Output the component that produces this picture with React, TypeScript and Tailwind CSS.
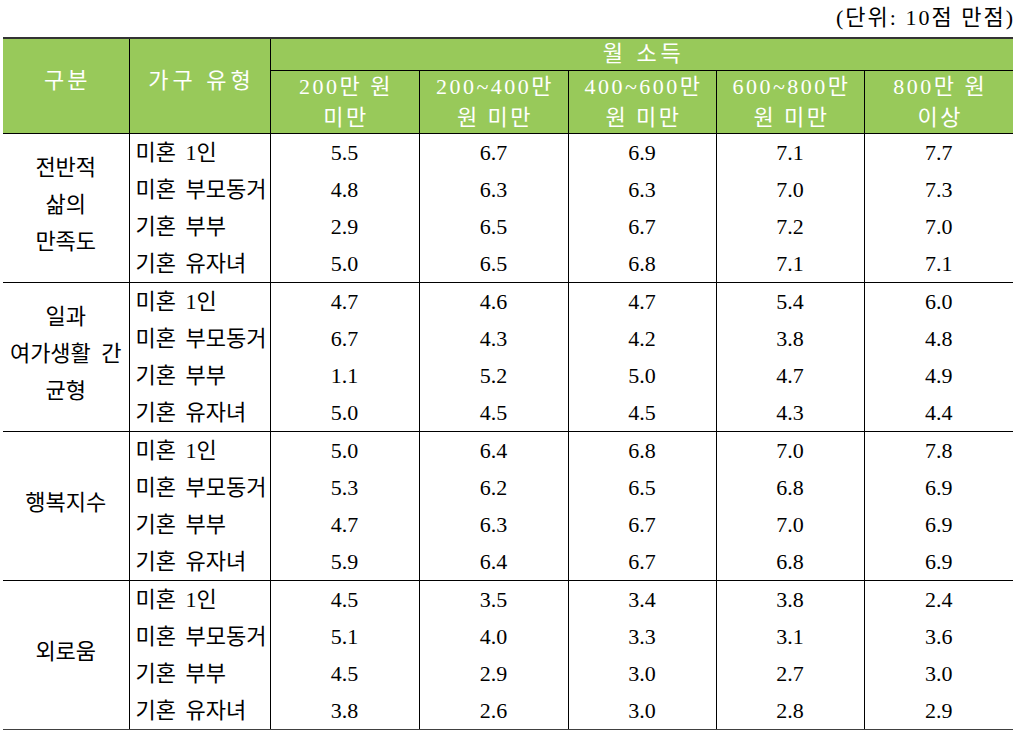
import React from "react";

const groups = [
  {
    label: ["전반적", "삶의", "만족도"],
    rows: [
      ["미혼 1인", "5.5", "6.7", "6.9", "7.1", "7.7"],
      ["미혼 부모동거", "4.8", "6.3", "6.3", "7.0", "7.3"],
      ["기혼 부부", "2.9", "6.5", "6.7", "7.2", "7.0"],
      ["기혼 유자녀", "5.0", "6.5", "6.8", "7.1", "7.1"],
    ],
  },
  {
    label: ["일과", "여가생활 간", "균형"],
    rows: [
      ["미혼 1인", "4.7", "4.6", "4.7", "5.4", "6.0"],
      ["미혼 부모동거", "6.7", "4.3", "4.2", "3.8", "4.8"],
      ["기혼 부부", "1.1", "5.2", "5.0", "4.7", "4.9"],
      ["기혼 유자녀", "5.0", "4.5", "4.5", "4.3", "4.4"],
    ],
  },
  {
    label: ["행복지수"],
    rows: [
      ["미혼 1인", "5.0", "6.4", "6.8", "7.0", "7.8"],
      ["미혼 부모동거", "5.3", "6.2", "6.5", "6.8", "6.9"],
      ["기혼 부부", "4.7", "6.3", "6.7", "7.0", "6.9"],
      ["기혼 유자녀", "5.9", "6.4", "6.7", "6.8", "6.9"],
    ],
  },
  {
    label: ["외로움"],
    rows: [
      ["미혼 1인", "4.5", "3.5", "3.4", "3.8", "2.4"],
      ["미혼 부모동거", "5.1", "4.0", "3.3", "3.1", "3.6"],
      ["기혼 부부", "4.5", "2.9", "3.0", "2.7", "3.0"],
      ["기혼 유자녀", "3.8", "2.6", "3.0", "2.8", "2.9"],
    ],
  },
];

const incomes = [
  ["200만 원", "미만"],
  ["200~400만", "원 미만"],
  ["400~600만", "원 미만"],
  ["600~800만", "원 미만"],
  ["800만 원", "이상"],
];

export default function App() {
  return (
    <div
      className="w-[1016px] h-[730px] bg-white text-black overflow-hidden"
      style={{ fontFamily: '"Liberation Serif", "Noto Sans CJK KR", serif' }}
    >
      <div className="h-[37px] pr-[1px] pt-[4px] text-right text-[22px] leading-[28px] tracking-[2px]">
        (단위: 10점 만점)
      </div>
      <table className="ml-[3px] w-[1010px] border-collapse table-fixed text-[22px]">
        <colgroup>
          <col className="w-[126px]" />
          <col className="w-[141px]" />
          <col className="w-[149px]" />
          <col className="w-[149px]" />
          <col className="w-[148px]" />
          <col className="w-[148px]" />
          <col className="w-[149px]" />
        </colgroup>
        <thead>
          <tr className="h-[32px] bg-[#98c95a] text-white border-t-2 border-t-[#333333]">
            <th
              rowSpan={2}
              className="font-normal tracking-[3px] pl-[3px] border-r border-r-black align-middle pb-[10px]"
            >
              구분
            </th>
            <th
              rowSpan={2}
              className="font-normal tracking-[4px] pl-[4px] border-r border-r-black align-middle pb-[10px]"
            >
              가구 유형
            </th>
            <th
              colSpan={5}
              className="font-normal tracking-[4px] pl-[4px] leading-[30px] border-b border-b-black"
            >
              월 소득
            </th>
          </tr>
          <tr className="h-[63px] bg-[#98c95a] text-white">
            {incomes.map((t, i) => (
              <th
                key={i}
                className={`font-normal tracking-[2.5px] pl-[3px] leading-[31px] align-middle whitespace-nowrap ${
                  i < 4 ? "border-r border-r-black" : ""
                }`}
              >
                {t[0]}
                <br />
                {t[1]}
              </th>
            ))}
          </tr>
        </thead>
        <tbody>
          {groups.map((g, gi) => (
            <React.Fragment key={gi}>
              {g.rows.map((r, ri) => (
                <tr
                  key={ri}
                  className={`h-[37px] ${ri === 0 ? "border-t border-t-black" : ""} ${
                    gi === 3 && ri === 3 ? "border-b-2 border-b-[#404040]" : ""
                  }`}
                >
                  {ri === 0 && (
                    <td
                      rowSpan={4}
                      className="text-center align-middle leading-[37px] border-r border-r-black pb-[6px] whitespace-nowrap [word-spacing:5px]"
                    >
                      {g.label.map((l, li) => (
                        <div key={li}>{l}</div>
                      ))}
                    </td>
                  )}
                  <td className="pl-[6px] border-r border-r-black leading-[37px] whitespace-nowrap [word-spacing:4px]">
                    {r[0]}
                  </td>
                  {r.slice(1).map((v, vi) => (
                    <td
                      key={vi}
                      className={`text-center leading-[37px] ${vi < 4 ? "border-r border-r-black" : ""}`}
                    >
                      {v}
                    </td>
                  ))}
                </tr>
              ))}
            </React.Fragment>
          ))}
        </tbody>
      </table>
    </div>
  );
}
